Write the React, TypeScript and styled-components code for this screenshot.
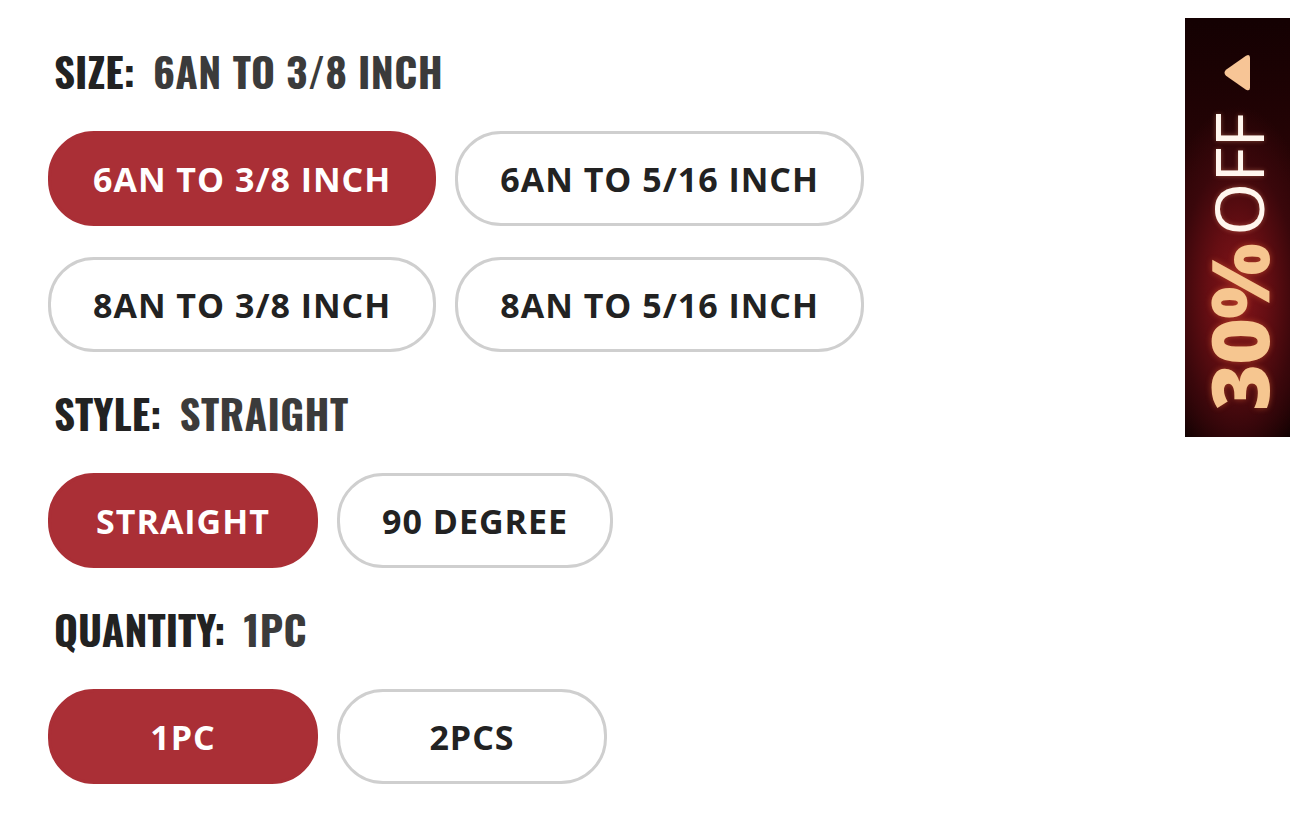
import React from "react";
import styled, { createGlobalStyle } from "styled-components";

const GlobalStyle = createGlobalStyle`
  html, body { margin: 0; padding: 0; background: #ffffff; }
  body { font-family: "Open Sans", "Liberation Sans", sans-serif; }
`;

const Page = styled.main`
  padding: 50px 0 0 48px;
  display: flex;
  flex-direction: column;
`;

const Group = styled.section`
  display: flex;
  flex-direction: column;
  margin-bottom: 40px;
`;

const Heading = styled.h2`
  margin: 0 0 40px 6px;
  font-family: "Oswald", "Liberation Sans Narrow", sans-serif;
  font-weight: 700;
  font-size: 41px;
  line-height: 41px;
  color: #222222;
  text-transform: uppercase;
  white-space: nowrap;
`;

const Value = styled.span`
  margin-left: 18px;
  color: #3b3b3b;
  letter-spacing: 0.4px;
`;

const Options = styled.div`
  display: flex;
  flex-wrap: wrap;
  gap: 31px 19px;
  max-width: 840px;
`;

const Option = styled.button<{ $active?: boolean }>`
  box-sizing: border-box;
  height: 95px;
  min-width: 270px;
  padding: 0 42px;
  display: inline-flex;
  align-items: center;
  justify-content: center;
  border-radius: 46px;
  border: 3px solid ${(p) => (p.$active ? "#aa2f36" : "#cfcfcf")};
  background: ${(p) => (p.$active ? "#aa2f36" : "#ffffff")};
  color: ${(p) => (p.$active ? "#ffffff" : "#222222")};
  font-family: "Open Sans", "Liberation Sans", sans-serif;
  font-weight: 700;
  font-size: 34px;
  letter-spacing: 1px;
  text-transform: uppercase;
  white-space: nowrap;
  cursor: pointer;
`;

const Badge = styled.aside`
  position: fixed;
  top: 18px;
  right: 0;
  width: 105px;
  height: 419px;
  background:
    radial-gradient(ellipse 80% 45% at 50% 66%, #84151a 0%, #660e13 35%, #3a070b 70%, rgba(20, 2, 3, 0) 100%),
    linear-gradient(180deg, #140102 0%, #2a0406 40%, #200305 85%, #0e0101 100%);
  display: flex;
  align-items: center;
  justify-content: center;
`;

const BadgeText = styled.div`
  writing-mode: vertical-rl;
  transform: rotate(180deg);
  display: flex;
  align-items: center;
  white-space: nowrap;
  line-height: 1;
  margin-top: 8px;
`;

const Percent = styled.span`
  font-family: "Open Sans", sans-serif;
  font-weight: 800;
  font-size: 80px;
  color: #f6c690;
  text-shadow: 0 0 6px rgba(255, 120, 60, 0.45);
  letter-spacing: -1px;
`;

const Off = styled.span`
  font-family: "Open Sans", sans-serif;
  font-weight: 400;
  font-size: 68px;
  color: #fff6ee;
  margin-top: 8px;
  text-shadow: 0 0 5px rgba(255, 160, 120, 0.4);
`;

const Arrow = styled.svg`
  margin-top: 20px;
  width: 30px;
  height: 40px;
`;

const groups = [
  {
    label: "Size",
    value: "6AN TO 3/8 INCH",
    options: ["6AN TO 3/8 INCH", "6AN TO 5/16 INCH", "8AN TO 3/8 INCH", "8AN TO 5/16 INCH"],
  },
  { label: "Style", value: "STRAIGHT", options: ["STRAIGHT", "90 DEGREE"] },
  { label: "Quantity", value: "1PC", options: ["1PC", "2PCS"] },
];

export default function App() {
  return (
    <>
      <GlobalStyle />
      <Page>
        {groups.map((g) => (
          <Group key={g.label}>
            <Heading>
              {g.label}:<Value>{g.value}</Value>
            </Heading>
            <Options>
              {g.options.map((o) => (
                <Option key={o} $active={o === g.value}>
                  {o}
                </Option>
              ))}
            </Options>
          </Group>
        ))}
      </Page>
      <Badge>
        <BadgeText>
          <Percent>30%</Percent>
          <Off>OFF</Off>
          <Arrow viewBox="0 0 30 40">
            <path
              d="M3 5 Q3 1 7 3 L27 17 Q30 20 27 23 L7 37 Q3 39 3 35 Z"
              fill="#f7c596"
            />
          </Arrow>
        </BadgeText>
      </Badge>
    </>
  );
}
